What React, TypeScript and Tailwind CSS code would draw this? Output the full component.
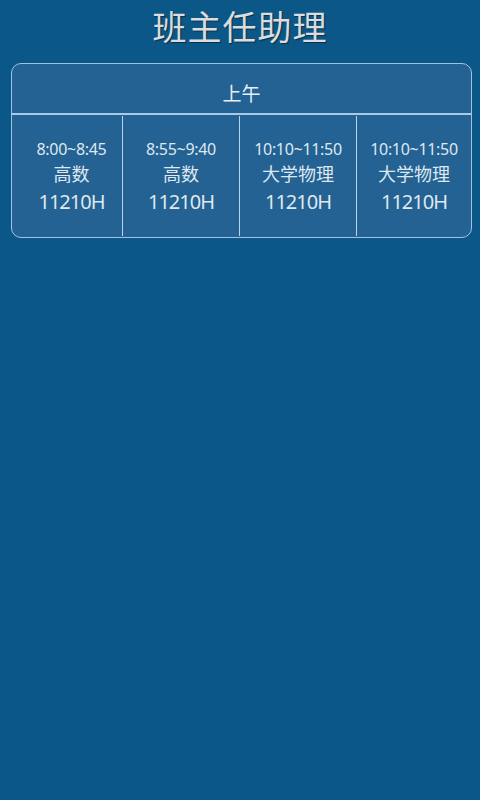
const slots = [
  { time: '8:00~8:45', course: '高数', room: '11210H', w: 'w-[111px] pl-[9px]' },
  { time: '8:55~9:40', course: '高数', room: '11210H', w: 'w-[117px]' },
  { time: '10:10~11:50', course: '大学物理', room: '11210H', w: 'w-[117px]' },
  { time: '10:10~11:50', course: '大学物理', room: '11210H', w: 'flex-1' },
]

export default function App() {
  return (
    <div
      className="w-[480px] h-[800px] bg-[#0b5888] text-[#dfe8f0]"
      style={{ fontFamily: '"Noto Sans", "Noto Sans CJK SC", sans-serif' }}
    >
      <h1 className="h-[63px] pt-[3px] text-center text-[34px] leading-[48px] tracking-[1px] text-[#dcdcdc] [text-shadow:1px_1px_1px_rgba(0,0,0,0.45)]">
        班主任助理
      </h1>

      <div className="ml-[11px] w-[461px] h-[175px] rounded-[10px] border border-[#9fc3e4] bg-[#236293] flex flex-col overflow-hidden">
        <div className="h-[49px] pt-[15px] text-center text-[19px] leading-[30px] text-[#e6eef6]">
          上午
        </div>
        <div className="h-[1.5px] bg-[#a9cbea]" />
        <div className="flex flex-1 pt-[1px] pb-[1px]">
          {slots.map((s, i) => (
            <div
              key={i}
              className={`${s.w} flex flex-col items-center pt-[21px] ${i < 3 ? 'border-r border-[#b8d4ee]' : ''}`}
            >
              <div className="text-[16px] leading-[24px] tracking-[-0.3px]">{s.time}</div>
              <div className="text-[18px] leading-[26px]">{s.course}</div>
              <div className="text-[20px] leading-[30px] tracking-[-1px]">{s.room}</div>
            </div>
          ))}
        </div>
      </div>
    </div>
  )
}
